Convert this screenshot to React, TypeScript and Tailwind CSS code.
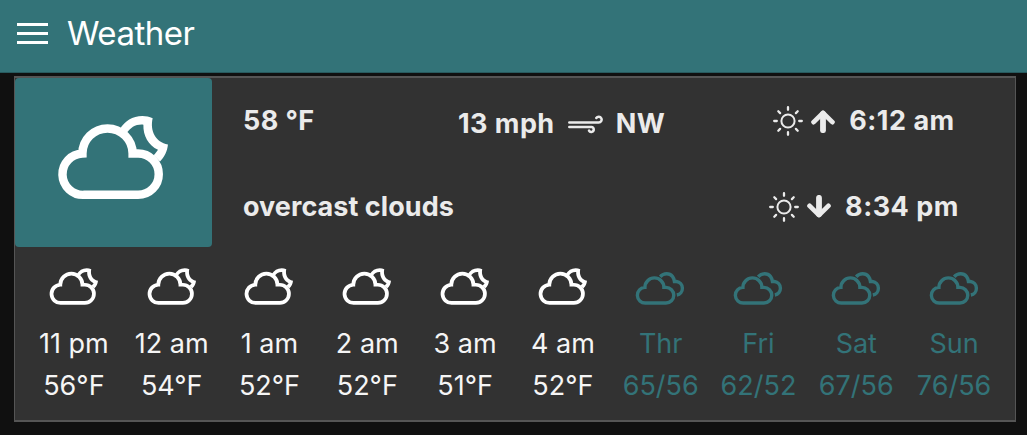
const CLOUD =
  'M244.4 250 A75.6 75.6 0 0 1 395.6 250 H412 A62.2 62.2 0 0 1 412 374.5 H248.7 A62.2 62.2 0 0 1 244.4 250 Z';

function CloudMoon({ className }: { className: string }) {
  return (
    <svg viewBox="174 137 328 250" className={className} overflow="visible">
      <path d={CLOUD} fill="none" stroke="currentColor" strokeWidth="25.5" />
      <path
        fill="currentColor"
        d="M357 177 C372 152 395 137 425 137 C436 137 446 139 456 144 C447 182 465 216 502 223 C500 243 491 262 478 274 L459 255 C465 249 469 244 472 239 C443 225 427 196 428 163 C406 161 389 171 377 190 Z"
      />
    </svg>
  );
}

function Clouds({ className }: { className: string }) {
  return (
    <svg
      viewBox="409 53 144 97"
      className={className}
      fill="none"
      stroke="currentColor"
      overflow="visible"
    >
      <path d={CLOUD} transform="translate(345 6) scale(.369)" strokeWidth="27" />
      <path
        d="M480 67 C491 55 508 56 516 66 Q521 72 522 81 H528 A20 20 0 0 1 529 120.5"
        strokeWidth="10"
      />
    </svg>
  );
}

function Sun() {
  return (
    <svg viewBox="0 0 30 30" className="size-[30px] shrink-0" fill="none" stroke="currentColor">
      <circle cx="15" cy="15" r="6.6" strokeWidth="2" />
      <path
        d="M15 1.2v2.6M15 26.2v2.6M1.2 15h2.6M26.2 15h2.6M5.3 5.3l1.8 1.8M22.9 22.9l1.8 1.8M5.3 24.7l1.8-1.8M22.9 7.1l1.8-1.8"
        strokeWidth="2.3"
        strokeLinecap="round"
      />
    </svg>
  );
}

function Arrow({ down }: { down?: boolean }) {
  return (
    <svg
      viewBox="0 0 24 24"
      className={down ? 'ml-2 h-6 w-6 shrink-0 rotate-180' : 'ml-2 h-6 w-6 shrink-0'}
      fill="none"
      stroke="currentColor"
      strokeLinecap="round"
      strokeLinejoin="round"
    >
      <path d="M2.6 13.1 12 3.9l9.4 9.2" strokeWidth="4.8" />
      <path d="M12 5v16.2" strokeWidth="5.8" />
    </svg>
  );
}

function Wind() {
  return (
    <svg
      viewBox="0 0 35 19"
      className="h-[19px] w-[35px] shrink-0"
      fill="none"
      stroke="currentColor"
      strokeWidth="2.5"
      strokeLinecap="round"
    >
      <path d="M1.3 7.5H30.7A2.9 2.9 0 1 0 28.3 3" />
      <path d="M1.3 12H23.4A2.5 2.5 0 1 1 21 15.6" />
    </svg>
  );
}

const hours = [
  ['11 pm', '56°F'],
  ['12 am', '54°F'],
  ['1 am', '52°F'],
  ['2 am', '52°F'],
  ['3 am', '51°F'],
  ['4 am', '52°F'],
];
const days = [
  ['Thr', '65/56'],
  ['Fri', '62/52'],
  ['Sat', '67/56'],
  ['Sun', '76/56'],
];

export default function App() {
  return (
    <div className="h-[435px] w-[1027px] overflow-hidden bg-[#101010] font-['Inter',sans-serif]">
      <header className="flex h-[73px] items-center border-b border-[#285a5e] bg-[#337378] pb-[6px] pl-[17px] text-white">
        <button aria-label="Menu" className="flex w-[31px] flex-col gap-[6px]">
          <span className="h-[3px] bg-white" />
          <span className="h-[3px] bg-white" />
          <span className="h-[3px] bg-white" />
        </button>
        <h1 className="ml-[19px] text-[33px] leading-10 tracking-[-0.5px] font-normal">Weather</h1>
      </header>
      <main className="mt-[3px] ml-[14px] h-[346px] w-[1002px] border-x border-y-2 border-[#555555] bg-[#323232]">
        <section className="flex h-[169px] text-[27px] leading-[34px] font-bold text-[#ebebeb]">
          <div className="flex w-[197px] shrink-0 justify-center rounded-[4px] bg-[#337378] pt-[38px] text-white">
            <CloudMoon className="ml-[-1px] h-[83px] w-[109px]" />
          </div>
          <div className="w-[246px] shrink-0 pl-[31px]">
            <div className="mt-[26px] tracking-[0.4px] whitespace-nowrap">58 °F</div>
            <div className="mt-[52px] tracking-[0.05px] whitespace-nowrap">overcast clouds</div>
          </div>
          <div className="flex h-[34px] w-[206px] shrink-0 translate-y-[29px] items-center tracking-[0.45px] whitespace-nowrap">
            <span>13 mph</span>
            <span className="mr-[13px] ml-[13px]"><Wind /></span>
            <span>NW</span>
          </div>
          <div className="ml-[94px] flex w-[212px] flex-col items-center tracking-[0.5px] whitespace-nowrap">
            <div className="mt-[26px] flex items-center">
              <Sun /><Arrow /><span className="ml-[14px]">6:12 am</span>
            </div>
            <div className="mt-[52px] flex items-center">
              <Sun /><Arrow down /><span className="ml-[14px]">8:34 pm</span>
            </div>
          </div>
        </section>
        <section className="ml-[10px] grid w-[978px] grid-cols-10 pt-[21px] text-center text-[27px] leading-[42px] font-normal text-[#f5f5f5]">
          {hours.map(([time, temp]) => (
            <div key={time} className="flex flex-col items-center whitespace-nowrap">
              <CloudMoon className="h-[37px] w-[48px] text-white" />
              <span className="mt-[17.5px]">{time}</span>
              <span>{temp}</span>
            </div>
          ))}
          {days.map(([day, range]) => (
            <div key={day} className="flex flex-col items-center whitespace-nowrap text-[#337378]">
              <Clouds className="mt-[4px] h-[33px] w-[49px]" />
              <span className="mt-[17.5px]">{day}</span>
              <span>{range}</span>
            </div>
          ))}
        </section>
      </main>
    </div>
  );
}
